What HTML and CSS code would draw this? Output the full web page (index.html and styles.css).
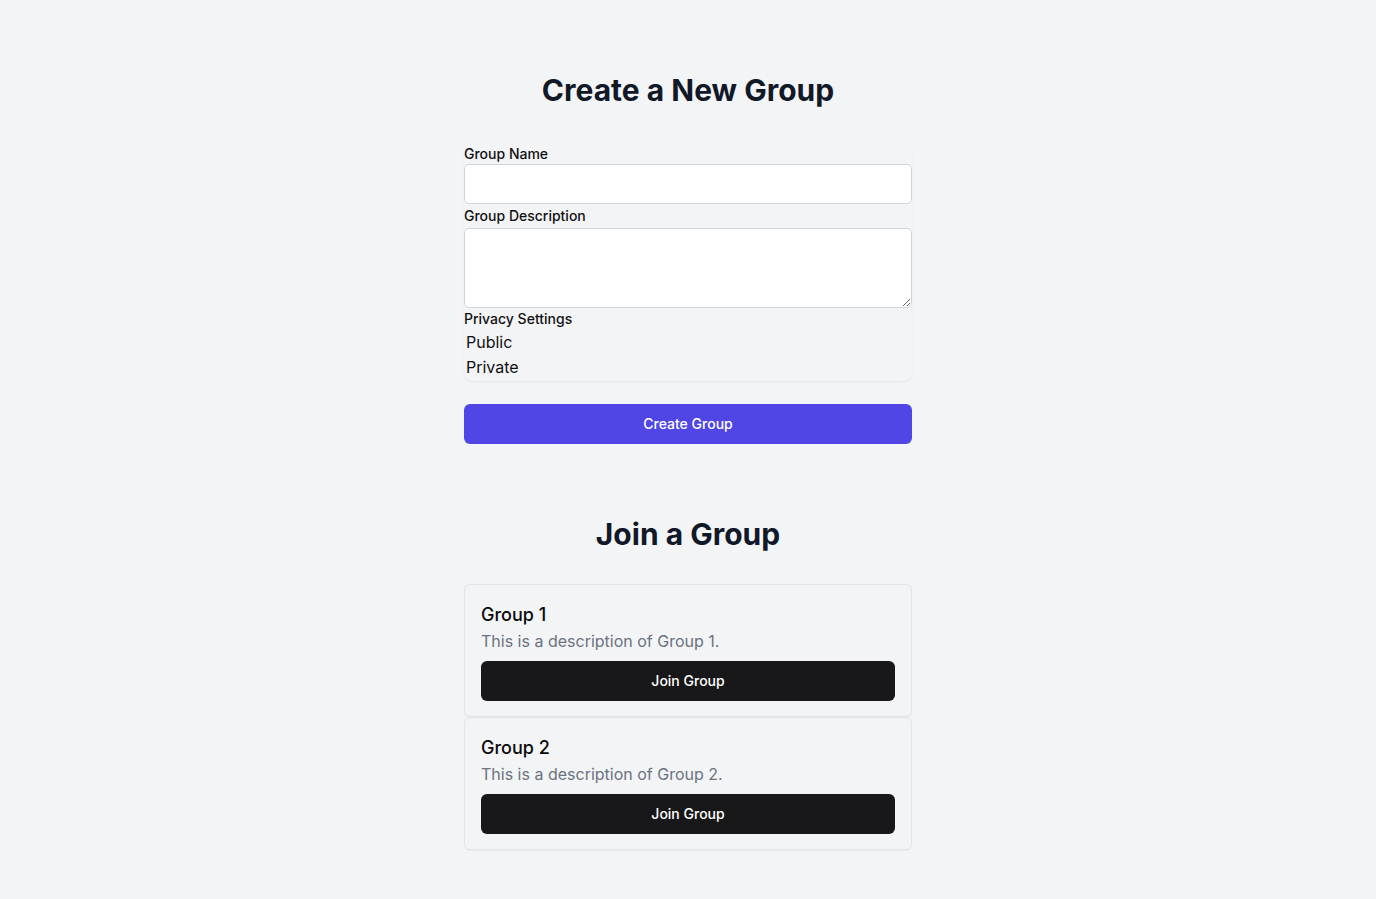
FILE: index.html
```html
<!DOCTYPE html>
<html lang="en">
<head>
<meta charset="utf-8">
<title>Groups</title>
<link rel="stylesheet" href="styles.css">
</head>
<body>
<main class="page">
  <section class="create">
    <h1 class="title">Create a New Group</h1>
    <form class="form-card">
      <label class="field-label" for="gname">Group Name</label>
      <input class="text-input" id="gname" type="text">
      <label class="field-label" for="gdesc">Group Description</label>
      <textarea class="text-area" id="gdesc"></textarea>
      <span class="field-label privacy">Privacy Settings</span>
      <label class="radio-option"><input class="radio" type="radio" name="privacy" value="public">Public</label>
      <label class="radio-option"><input class="radio" type="radio" name="privacy" value="private">Private</label>
    </form>
    <button class="btn btn-primary" type="button">Create Group</button>
  </section>
  <section class="join">
    <h2 class="title">Join a Group</h2>
    <div class="group-list">
      <div class="group-card">
        <h3 class="group-name">Group 1</h3>
        <p class="group-desc">This is a description of Group 1.</p>
        <button class="btn btn-dark" type="button">Join Group</button>
      </div>
      <div class="group-card">
        <h3 class="group-name">Group 2</h3>
        <p class="group-desc">This is a description of Group 2.</p>
        <button class="btn btn-dark" type="button">Join Group</button>
      </div>
    </div>
  </section>
</main>
</body>
</html>
```
FILE: styles.css
```css
* { box-sizing: border-box; }
html, body { margin: 0; padding: 0; }
body {
  background: #f3f4f6;
  font-family: Inter, "Noto Sans", sans-serif;
  color: #111827;
  min-height: 899px;
}
.page {
  width: 448px;
  margin: 0 auto;
  padding-top: 72px;
  padding-bottom: 48px;
}
.title {
  margin: 0;
  font-size: 30px;
  line-height: 36px;
  font-weight: 700;
  text-align: center;
  color: #111827;
  letter-spacing: 0;
}
.form-card {
  margin-top: 34px;
  display: flex;
  flex-direction: column;
  padding: 2px 0;
  border-radius: 8px;
  box-shadow: 0 1px 2px rgba(0, 0, 0, 0.06);
}
.field-label {
  display: block;
  font-size: 14px;
  line-height: 20px;
  font-weight: 500;
  color: #111;
}
.field-label:first-child {
  line-height: 19px;
  padding-bottom: 1px;
}
.text-input {
  display: block;
  width: 100%;
  height: 40px;
  margin: 0 0 2px;
  border: 1px solid #d1d5db;
  border-radius: 5px;
  background: #fff;
  font: inherit;
}
.text-area {
  display: block;
  width: 100%;
  height: 80px;
  margin: 2px 0 1px;
  border: 1px solid #d1d5db;
  border-radius: 5px;
  background: #fff;
  font: inherit;
}
.radio-option {
  display: flex;
  align-items: center;
  font-size: 16px;
  line-height: 24px;
  color: #111;
  padding-left: 2px;
  margin-top: 1px;
}
.radio {
  appearance: none;
  -webkit-appearance: none;
  width: 0;
  height: 0;
  margin: 0;
  border: 0;
}
.btn {
  display: block;
  width: 100%;
  height: 40px;
  padding: 0 0 2px;
  border: 0;
  border-radius: 6px;
  font-family: Inter, "Noto Sans", sans-serif;
  font-size: 14px;
  font-weight: 500;
  color: #fff;
  cursor: pointer;
}
.btn-primary {
  margin-top: 23px;
  background: #4f46e5;
}
.join {
  margin-top: 72px;
}
.group-list {
  margin-top: 32px;
  display: flex;
  flex-direction: column;
}
.group-card {
  border: 1px solid #e2e4e8;
  border-radius: 6px;
  padding: 16px 16px 15px;
  box-shadow: 0 1px 2px rgba(0, 0, 0, 0.04);
}
.group-name {
  margin: 0;
  font-size: 18px;
  line-height: 28px;
  font-weight: 500;
  color: #0a0a0a;
}
.group-desc {
  margin: 0;
  font-size: 16px;
  line-height: 24px;
  color: #6b7280;
}
.btn-dark {
  margin-top: 8px;
  background: #18181b;
}
```
